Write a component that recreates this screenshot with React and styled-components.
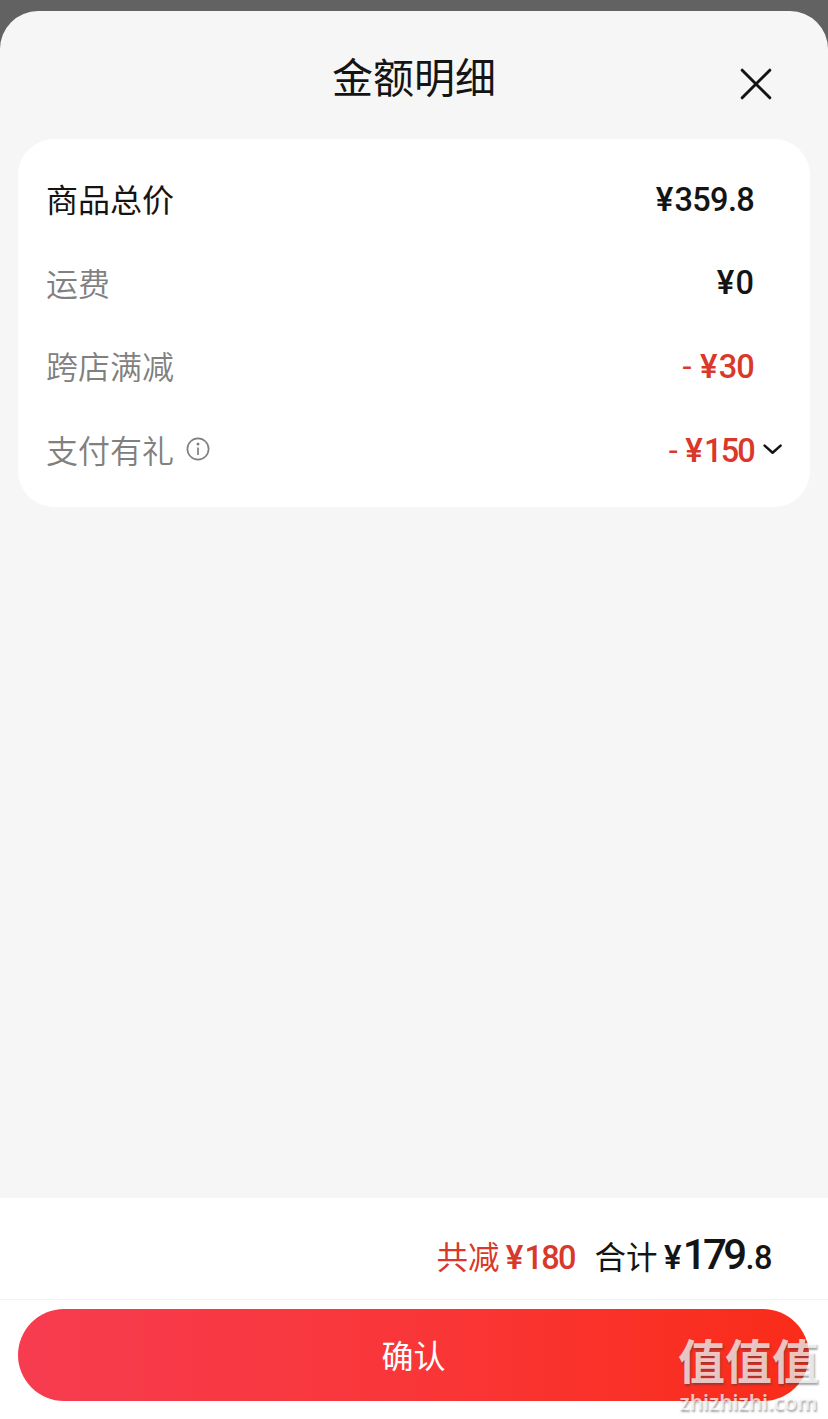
import styled, { createGlobalStyle } from "styled-components";

const GlobalStyle = createGlobalStyle`
  * {
    box-sizing: border-box;
  }

  body {
    margin: 0;
    background: #626262;
    font-family: "Noto Sans CJK SC", sans-serif;
    color: #141414;
  }
`;

const Overlay = styled.div`
  position: relative;
  height: 1419px;
  padding-top: 11px;
  background: #626262;
  overflow: hidden;
`;

const Sheet = styled.div`
  height: 1408px;
  display: flex;
  flex-direction: column;
  background: #f6f6f6;
  border-radius: 38px 38px 0 0;
  overflow: hidden;
`;

const Header = styled.header`
  height: 128px;
  flex-shrink: 0;
  display: grid;
  grid-template-columns: 1fr auto 1fr;
  align-items: start;
`;

const Title = styled.h1`
  grid-column: 2;
  margin: 34px 0 0;
  font-size: 41px;
  font-weight: 400;
  line-height: 60px;
`;

const CloseButton = styled.button`
  grid-column: 3;
  justify-self: end;
  display: flex;
  margin: 56px 55px 0 0;
  padding: 0;
  border: none;
  background: none;
  color: #141414;
`;

const Card = styled.section`
  height: 368px;
  margin: 0 18px;
  padding: 19px 28px 0;
  background: #ffffff;
  border-radius: 36px;
`;

const Row = styled.div`
  height: 83.6px;
  display: flex;
  align-items: center;
`;

const Label = styled.span`
  margin-bottom: 3px;
  font-size: 32px;
  font-weight: ${({ $strong }) => ($strong ? 400 : 350)};
  line-height: 48px;
  color: ${({ $strong }) => ($strong ? "#141414" : "#808080")};
`;

const InfoIcon = styled.svg`
  margin: 0 0 3px 12px;
`;

const Price = styled.span`
  margin-left: auto;
  font-family: "Roboto", sans-serif;
  font-size: 32.5px;
  font-weight: 500;
  line-height: 40px;
  letter-spacing: ${({ $spacing }) => $spacing || 0}px;
  color: ${({ $red }) => ($red ? "#d9382a" : "#141414")};
`;

const Yen = styled.span`
  margin-right: 1px;
  font-family: "Inter", sans-serif;
  font-size: 32px;
  font-weight: 600;
  letter-spacing: 0;
`;

const Minus = styled.span`
  margin-right: 9px;
  font-weight: 400;
`;

const ArrowSlot = styled.span`
  width: 28px;
  height: 16px;
  display: flex;
  justify-content: flex-end;
`;

const Footer = styled.footer`
  height: 221px;
  margin-top: auto;
  background: #ffffff;
`;

const Totals = styled.div`
  height: 102px;
  padding: 27px 56px 0 0;
  display: flex;
  justify-content: flex-end;
  align-items: baseline;
  border-bottom: 1px solid #f3f3f3;
  line-height: 60px;
`;

const TotalLabel = styled.span`
  margin-left: ${({ $gap }) => $gap || 0}px;
  font-size: 31.5px;
  font-weight: 400;
  color: ${({ $red }) => ($red ? "#d9382a" : "#141414")};
`;

const TotalPrice = styled(Price)`
  margin-left: 6px;
`;

const BigDigits = styled.span`
  margin-right: 2px;
  font-size: 42px;
  letter-spacing: -3.6px;
`;

const ConfirmButton = styled.button`
  width: 791px;
  height: 92px;
  display: block;
  margin: 9px 0 0 18px;
  padding: 0 0 3px;
  border: none;
  border-radius: 46px;
  background: linear-gradient(90deg, #f73c50 0%, #f93638 50%, #fa2c19 100%);
  color: #ffffff;
  font-family: inherit;
  font-size: 32px;
  font-weight: 400;
`;

const Watermark = styled.div`
  position: absolute;
  right: 8px;
  bottom: 6px;
  width: 143px;
  display: flex;
  flex-direction: column;
  align-items: center;
  color: rgba(255, 255, 255, 0.72);
  text-shadow: 1px 2px 2px rgba(60, 60, 60, 0.45);
  pointer-events: none;
`;

const WatermarkLogo = styled.div`
  margin-bottom: 8px;
  font-size: 47px;
  font-weight: 700;
  line-height: 48px;
`;

const WatermarkUrl = styled.div`
  font-family: "Noto Sans", sans-serif;
  font-size: 21px;
  font-weight: 600;
  line-height: 22px;
  white-space: nowrap;
`;

const rows = [
  { label: "商品总价", price: "359.8", strong: true, spacing: -0.7 },
  { label: "运费", price: "0" },
  { label: "跨店满减", price: "30", discount: true, spacing: -0.8 },
  {
    label: "支付有礼",
    price: "150",
    discount: true,
    spacing: -1.8,
    info: true,
    arrow: true,
  },
];

function DetailRow({ label, price, strong, discount, spacing, info, arrow }) {
  return (
    <Row>
      <Label $strong={strong}>{label}</Label>
      {info && (
        <InfoIcon width="24" height="24" viewBox="0 0 24 24" fill="none">
          <circle cx="12" cy="12" r="10.6" stroke="#808080" strokeWidth="1.7" />
          <circle cx="12" cy="7" r="1.5" fill="#808080" />
          <path d="M12 10.5V18" stroke="#808080" strokeWidth="1.7" />
        </InfoIcon>
      )}
      <Price $red={discount} $spacing={spacing}>
        {discount && <Minus>-</Minus>}
        <Yen>¥</Yen>
        {price}
      </Price>
      <ArrowSlot>
        {arrow && (
          <svg width="20" height="12" viewBox="0 0 20 12" fill="none">
            <path
              d="M2.6 2.6L10.6 9.8L18.6 2.6"
              stroke="#141414"
              strokeWidth="2.5"
              strokeLinecap="round"
              strokeLinejoin="round"
            />
          </svg>
        )}
      </ArrowSlot>
    </Row>
  );
}

export default function App() {
  return (
    <Overlay>
      <GlobalStyle />
      <Sheet>
        <Header>
          <Title>金额明细</Title>
          <CloseButton aria-label="关闭">
            <svg width="34" height="34" viewBox="0 0 34 34" fill="none">
              <path
                d="M3.2 3.2L30.8 30.8M30.8 3.2L3.2 30.8"
                stroke="currentColor"
                strokeWidth="3"
                strokeLinecap="round"
              />
            </svg>
          </CloseButton>
        </Header>
        <Card>
          {rows.map((row) => (
            <DetailRow key={row.label} {...row} />
          ))}
        </Card>
        <Footer>
          <Totals>
            <TotalLabel $red>共减</TotalLabel>
            <TotalPrice $red $spacing={-1.8}>
              <Yen>¥</Yen>180
            </TotalPrice>
            <TotalLabel $gap={20}>合计</TotalLabel>
            <TotalPrice $spacing={-0.5}>
              <Yen>¥</Yen>
              <BigDigits>179</BigDigits>.8
            </TotalPrice>
          </Totals>
          <ConfirmButton>确认</ConfirmButton>
        </Footer>
      </Sheet>
      <Watermark>
        <WatermarkLogo>值值值</WatermarkLogo>
        <WatermarkUrl>zhizhizhi.com</WatermarkUrl>
      </Watermark>
    </Overlay>
  );
}
